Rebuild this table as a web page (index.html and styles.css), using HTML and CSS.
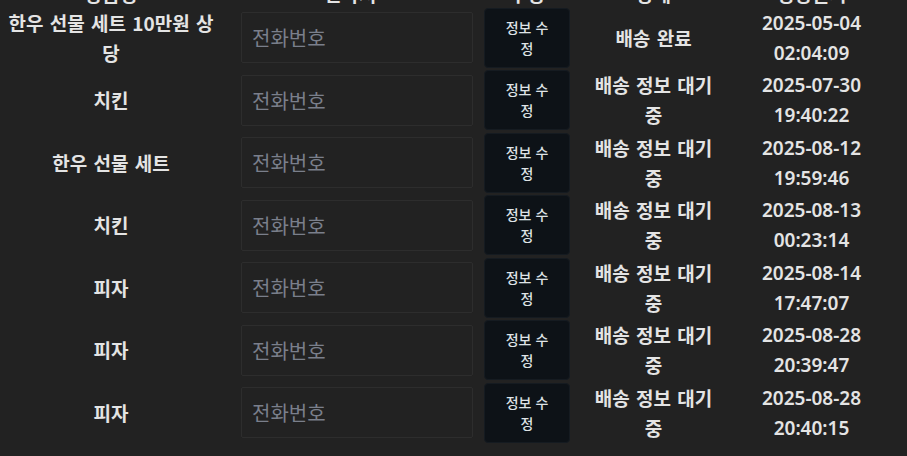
FILE: index.html
```html
<!DOCTYPE html>
<html lang="ko">
<head>
<meta charset="utf-8">
<title>주문 목록</title>
<link rel="stylesheet" href="styles.css">
</head>
<body>
<div class="table">
  <div class="row head">
    <div class="cell">상품명</div>
    <div class="cell">연락처</div>
    <div class="cell">수정</div>
    <div class="cell">상태</div>
    <div class="cell">생성일시</div>
  </div>
  <div class="row">
    <div class="cell name">한우 선물 세트 10만원 상당</div>
    <div class="cell phone"><input class="input" type="text" placeholder="전화번호"></div>
    <div class="cell act"><button class="btn">정보 수정</button></div>
    <div class="cell status">배송 완료</div>
    <div class="cell date">2025-05-04 02:04:09</div>
  </div>
  <div class="row">
    <div class="cell name">치킨</div>
    <div class="cell phone"><input class="input" type="text" placeholder="전화번호"></div>
    <div class="cell act"><button class="btn">정보 수정</button></div>
    <div class="cell status">배송 정보 대기 중</div>
    <div class="cell date">2025-07-30 19:40:22</div>
  </div>
  <div class="row">
    <div class="cell name">한우 선물 세트</div>
    <div class="cell phone"><input class="input" type="text" placeholder="전화번호"></div>
    <div class="cell act"><button class="btn">정보 수정</button></div>
    <div class="cell status">배송 정보 대기 중</div>
    <div class="cell date">2025-08-12 19:59:46</div>
  </div>
  <div class="row">
    <div class="cell name">치킨</div>
    <div class="cell phone"><input class="input" type="text" placeholder="전화번호"></div>
    <div class="cell act"><button class="btn">정보 수정</button></div>
    <div class="cell status">배송 정보 대기 중</div>
    <div class="cell date">2025-08-13 00:23:14</div>
  </div>
  <div class="row">
    <div class="cell name">피자</div>
    <div class="cell phone"><input class="input" type="text" placeholder="전화번호"></div>
    <div class="cell act"><button class="btn">정보 수정</button></div>
    <div class="cell status">배송 정보 대기 중</div>
    <div class="cell date">2025-08-14 17:47:07</div>
  </div>
  <div class="row">
    <div class="cell name">피자</div>
    <div class="cell phone"><input class="input" type="text" placeholder="전화번호"></div>
    <div class="cell act"><button class="btn">정보 수정</button></div>
    <div class="cell status">배송 정보 대기 중</div>
    <div class="cell date">2025-08-28 20:39:47</div>
  </div>
  <div class="row">
    <div class="cell name">피자</div>
    <div class="cell phone"><input class="input" type="text" placeholder="전화번호"></div>
    <div class="cell act"><button class="btn">정보 수정</button></div>
    <div class="cell status">배송 정보 대기 중</div>
    <div class="cell date">2025-08-28 20:40:15</div>
  </div>
</div>
</body>
</html>
```

FILE: styles.css
```css
html, body {
  margin: 0;
  padding: 0;
  background: #222222;
  overflow: hidden;
}
body {
  font-family: "Noto Sans CJK KR", "Noto Sans", sans-serif;
  color: #e4e4e4;
}
.table {
  width: 892px;
  display: flex;
  flex-direction: column;
}
.row {
  display: grid;
  grid-template-columns: 222px 256px 98px 155px 161px;
  height: 62.5px;
  align-items: center;
}
.row.head {
  height: 26px;
  margin-top: -19.5px;
}
.cell {
  text-align: center;
  font-size: 19px;
  line-height: 30px;
  font-weight: 600;
  padding: 0 8px;
  box-sizing: border-box;
  word-spacing: 1px;
}
.head .cell {
  line-height: 26px;
}
.name {
  padding: 0 6px;
}
.phone {
  padding: 0 5px 0 19px;
  display: flex;
}
.input {
  width: 232px;
  height: 51px;
  box-sizing: border-box;
  background: #222222;
  border: 1px solid #2d2d2d;
  border-radius: 2px;
  padding: 0 10px;
  font-family: "Noto Sans CJK KR", "Noto Sans", sans-serif;
  font-size: 20px;
  color: #e4e4e4;
  outline: none;
}
.input::placeholder {
  color: #7a7f8b;
}
.act {
  padding: 0 6px;
  display: flex;
}
.btn {
  width: 86px;
  height: 60px;
  box-sizing: border-box;
  padding: 0 15px;
  background: #0d1217;
  border: 1px solid #151b21;
  border-radius: 4px;
  color: #dfe3e6;
  font-family: "Noto Sans CJK KR", "Noto Sans", sans-serif;
  font-size: 14px;
  line-height: 21px;
  font-weight: 500;
  white-space: normal;
  word-break: normal;
}
.status {
  padding: 0 12px;
}
.date {
  padding: 0 24px;
  font-family: "Noto Sans", "Noto Sans CJK KR", sans-serif;
  font-size: 19px;
  font-weight: 600;
}
```
